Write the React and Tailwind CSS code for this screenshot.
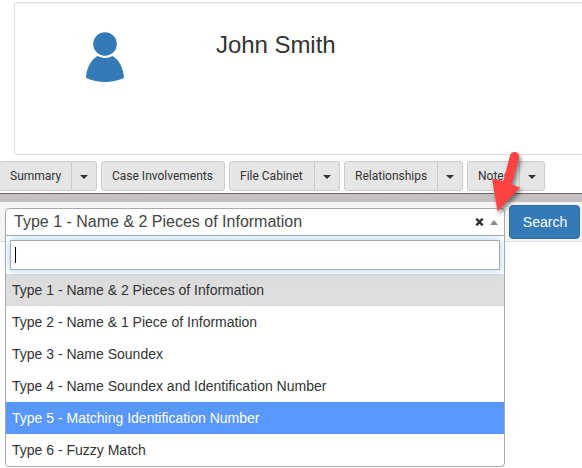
import React from "react";

const TABS = [
  { label: "Summary", main: "w-[71px] pl-[10px]", caret: "w-[25px]", edge: "-ml-px" },
  { label: "Case Involvements", main: "w-[122px] pl-[10px]", caret: null, edge: "" },
  { label: "File Cabinet", main: "w-[84px] pl-[10px]", caret: "w-[25px]", edge: "" },
  { label: "Relationships", main: "w-[92px] pl-[10px]", caret: "w-[25px]", edge: "" },
  { label: "Notes", main: "w-[51px] pl-[10px]", caret: "w-[25px]", edge: "" },
];

const OPTIONS = [
  { label: "Type 1 - Name & 2 Pieces of Information", tone: "bg-[#dddddd] text-[#333]" },
  { label: "Type 2 - Name & 1 Piece of Information", tone: "text-[#333]" },
  { label: "Type 3 - Name Soundex", tone: "text-[#333]" },
  { label: "Type 4 - Name Soundex and Identification Number", tone: "text-[#333]" },
  { label: "Type 5 - Matching Identification Number", tone: "bg-[#5897fb] text-white" },
  { label: "Type 6 - Fuzzy Match", tone: "text-[#333]" },
];

function Tab({ tab }) {
  return (
    <div className={`flex h-[30px] shrink-0 overflow-hidden rounded-[3px] border border-[#ccc] bg-[#e6e6e6] ${tab.edge}`}>
      <button className={`h-full text-left font-[Roboto,'Liberation_Sans',sans-serif] text-[12px] leading-[28px] whitespace-nowrap text-[#333] ${tab.main}`}>
        {tab.label}
      </button>
      {tab.caret && (
        <button className={`flex h-full items-center justify-center border-l border-[#ccc] pt-[2px] ${tab.caret}`}>
          <svg width="8" height="4" viewBox="0 0 8 4">
            <path d="M0 0h8L4 4z" fill="#333" />
          </svg>
        </button>
      )}
    </div>
  );
}

export default function App() {
  return (
    <div className="relative h-[468px] w-[582px] overflow-hidden bg-white pt-[2px] font-['Liberation_Sans',Arial,sans-serif] text-[#333]">
      <div className="ml-[14px] flex h-[153px] w-[580px] rounded-[3px] border border-[#ddd] bg-white shadow-[inset_0_1px_0_#f4f4f4]">
        <svg className="mt-[29px] ml-[70px]" width="40" height="51" viewBox="0 0 40 51">
          <circle cx="20" cy="12" r="11.8" fill="#337ab7" />
          <path d="M12.5 24Q20 27.8 27.5 24C34.5 28 38.5 36.5 39 46Q20 54 1 46C1.500 36.500 5.500 28 12.500 24Z" fill="#337ab7" />
        </svg>
        <h1 className="mt-[28px] ml-[91px] text-[24px] leading-[28px] tracking-[-0.05px]">John Smith</h1>
      </div>

      <nav className="mt-[6px] flex gap-[4px]">
        {TABS.map((tab) => (
          <Tab key={tab.label} tab={tab} />
        ))}
      </nav>

      <div className="mt-[2px] h-px bg-[#666]" />
      <div className="h-[8px] bg-[#c4c0c0]" />
      <div className="flex h-[40px] items-start gap-[4px] border-b border-[#ddd] bg-[#f4f4f4] pl-[5px]">
        <div className="relative mt-[6px] w-[500px]">
          <div className="flex h-[28px] items-center rounded-t-[4px] border border-[#aaa] bg-white pr-[6px] pl-[8px]">
            <span className="flex-1 text-[16px] leading-[26px] text-[#444]">Type 1 - Name & 2 Pieces of Information</span>
            <svg className="mr-[6px]" width="9" height="8" viewBox="0 0 9 8">
              <path d="M1.300 0.700L7.700 7.300M7.700 0.700L1.300 7.300" stroke="#333" strokeWidth="2.500" />
            </svg>
            <svg width="8" height="5" viewBox="0 0 8 5">
              <path d="M0 5L4 0L8 5z" fill="#888" />
            </svg>
          </div>
          <div className="absolute top-[27px] left-0 w-[500px] rounded-b-[4px] border border-[#aaa] bg-white">
            <div className="h-[38px] p-[4px]">
              <div className="relative flex h-[30px] items-center border border-[#aaa] bg-white pl-[4px] shadow-[0_0_8px_rgba(102,175,233,0.6)]">
                <span className="h-[16px] w-px bg-black" />
              </div>
            </div>
            {OPTIONS.map((option) => (
              <div key={option.label} className={`h-[32px] px-[6px] text-[14px] leading-[32px] ${option.tone}`}>
                {option.label}
              </div>
            ))}
          </div>
        </div>
        <button className="mt-[3px] h-[34px] w-[71px] rounded-[4px] border border-[#2e6da4] bg-[#337ab7] pl-px text-[14px] leading-[32px] text-white">
          Search
        </button>
      </div>

      <svg className="absolute top-[146px] left-[484px] drop-shadow-[2px_3px_2px_rgba(0,0,0,0.45)]" width="44" height="70" viewBox="0 0 44 70">
        <path d="M26 9.500C28 3.500 36.500 6 35 12.500L27.500 38.500L36 41.500L13.500 65.500L8 32.500L19.300 35Z" fill="#ff4343" />
      </svg>
    </div>
  );
}
